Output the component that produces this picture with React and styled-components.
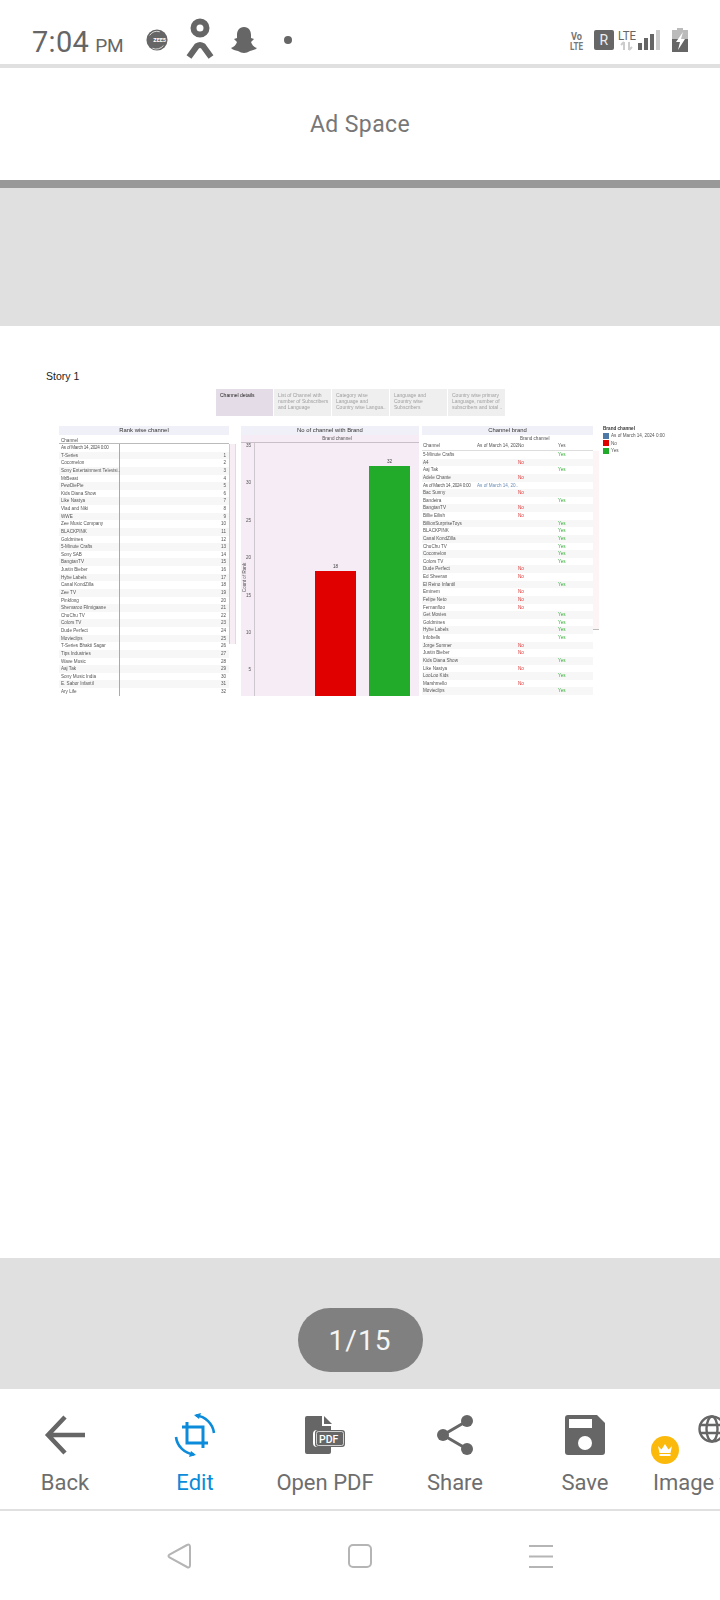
import styled, { createGlobalStyle } from 'styled-components';

const GlobalStyle = createGlobalStyle`
  html, body {
    margin: 0;
    padding: 0;
    background: #fff;
  }
  * {
    box-sizing: border-box;
  }
`;

const rankRows = [
  'T-Series', 'Cocomelon', 'Sony Entertainment Televisi..', 'MrBeast', 'PewDiePie',
  'Kids Diana Show', 'Like Nastya', 'Vlad and Niki', 'WWE', 'Zee Music Company',
  'BLACKPINK', 'Goldmines', '5-Minute Crafts', 'Sony SAB', 'BangtanTV', 'Justin Bieber',
  'Hybe Labels', 'Canal KondZilla', 'Zee TV', 'Pinkfong', 'Shemaroo Filmigaane',
  'ChuChu TV', 'Colors TV', 'Dude Perfect', 'Movieclips', 'T-Series Bhakti Sagar',
  'Tips Industries', 'Wave Music', 'Aaj Tak', 'Sony Music India', 'E. Sabor Infantil', 'Ary Life',
];

const brandRows = [
  ['5-Minute Crafts', 'Yes'], ['A4', 'No'], ['Aaj Tak', 'Yes'], ['Adele Chante', 'No'],
  ['As of March 14, 2024 0:00', 'date'], ['Bac Sunny', 'No'], ['Bandeira', 'Yes'], ['BangtanTV', 'No'],
  ['Billie Eilish', 'No'], ['BillionSurpriseToys', 'Yes'], ['BLACKPINK', 'Yes'], ['Canal KondZilla', 'Yes'],
  ['ChuChu TV', 'Yes'], ['Cocomelon', 'Yes'], ['Colors TV', 'Yes'], ['Dude Perfect', 'No'],
  ['Ed Sheeran', 'No'], ['El Reino Infantil', 'Yes'], ['Eminem', 'No'], ['Felipe Neto', 'No'],
  ['Fernanfloo', 'No'], ['Get Movies', 'Yes'], ['Goldmines', 'Yes'], ['Hybe Labels', 'Yes'],
  ['Infobells', 'Yes'], ['Jorge Sumner', 'No'], ['Justin Bieber', 'No'], ['Kids Diana Show', 'Yes'],
  ['Like Nastya', 'No'], ['LooLoo Kids', 'Yes'], ['Marshmello', 'No'], ['Movieclips', 'Yes'],
];

const storyTabs = [
  'Channel details',
  'List of Channel with\nnumber of Subscribers\nand Language',
  'Category wise\nLanguage and\nCountry wise Langua..',
  'Language and\nCountry wise\nSubscribers',
  'Country wise primary\nLanguage, number of\nsubscribers and total ..',
];

const yTicks = ['35', '30', '25', '20', '15', '10', '5'];

const Screen = styled.div`
  width: 720px;
  height: 1600px;
  overflow: hidden;
  display: flex;
  flex-direction: column;
  background: #fff;
  font-family: Roboto, 'Liberation Sans', sans-serif;
`;

const StatusBar = styled.div`
  height: 68px;
  flex: none;
  display: flex;
  align-items: center;
  padding: 16px 32px 0 32px;
  border-bottom: 4px solid #e0e0e0;
  color: #666;
`;

const Clock = styled.div`
  font-size: 29px;
  width: 114px;
  margin-top: 3px;
  letter-spacing: 0.3px;
  white-space: nowrap;
  span {
    font-size: 19px;
    margin-left: 6px;
    letter-spacing: 0;
  }
`;

const NotifIcons = styled.div`
  display: flex;
  align-items: center;
  flex: 1;
`;

const SysIcons = styled.div`
  display: flex;
  align-items: center;
`;

const AdBar = styled.div`
  height: 112px;
  flex: none;
  display: flex;
  align-items: center;
  justify-content: center;
  font-size: 23px;
  color: #777;
  letter-spacing: 0.4px;
`;

const DarkRule = styled.div`
  height: 8px;
  flex: none;
  background: #999;
`;

const GreyBand = styled.div`
  height: ${p => p.$h}px;
  flex: none;
  background: #e0e0e0;
  display: flex;
  justify-content: center;
  position: relative;
`;

const DocPage = styled.div`
  flex: 1;
  background: #fff;
  min-height: 0;
  padding: 44px 0 0 46px;
`;

const StoryTitle = styled.div`
  font-family: 'Liberation Sans', sans-serif;
  font-size: 10.5px;
  color: #222;
  line-height: 13px;
`;

const TabRow = styled.div`
  display: flex;
  gap: 1px;
  margin: 6px 0 0 170px;
  filter: blur(0.25px);
`;

const StoryTab = styled.div`
  width: 57px;
  height: 27px;
  padding: 3px 2px 0 4px;
  background: ${p => (p.$active ? '#e4dce6' : '#efefef')};
  color: ${p => (p.$active ? '#222' : '#a0a0a0')};
  font-family: 'Liberation Sans', sans-serif;
  font-size: 5px;
  line-height: 6px;
  white-space: pre-line;
`;

const Dash = styled.div`
  display: flex;
  height: 270px;
  margin: 10px 0 0 13px;
  overflow: hidden;
  filter: blur(0.25px);
`;

const Panel = styled.div`
  width: ${p => p.$w}px;
  margin-right: ${p => p.$mr}px;
  flex: none;
`;

const PanelTitle = styled.div`
  height: 9px;
  width: ${p => p.$w}px;
  background: #f0f0f8;
  text-align: center;
  font-family: 'Liberation Sans', sans-serif;
  font-size: 5.9px;
  line-height: 9px;
  color: #333;
`;

const Micro = styled.div`
  font-family: 'Liberation Sans', sans-serif;
  font-size: 4.6px;
  color: #555;
  white-space: nowrap;
`;

const RankHead = styled(Micro)`
  width: 170px;
  height: 9px;
  padding: 3px 0 0 2px;
  line-height: 5px;
  border-bottom: 1px solid #bbb;
`;

const RankBody = styled.div`
  display: grid;
  grid-template-columns: 170px 7px;
`;

const RankRow = styled(Micro)`
  display: grid;
  grid-column: 1;
  grid-template-columns: 61px 1fr;
  height: 7.63px;
  line-height: 7.63px;
  background: ${p => (p.$odd ? '#f7f7f7' : '#fff')};
`;

const RankName = styled.div`
  padding-left: 2px;
  border-right: 1px solid #aaa;
`;

const AsOf = styled.span`
  letter-spacing: -0.25px;
`;

const RankNum = styled.div`
  text-align: right;
  padding-right: 3px;
`;

const RankStripe = styled.div`
  grid-column: 2;
  grid-row: 1 / 34;
  height: 200px;
  background: #f7eef5;
  border-left: 1px solid #ccc;
  border-right: 1px solid #ddd;
`;

const ChartBody = styled.div`
  height: 261px;
  background: #f5ecf5;
  display: flex;
  flex-direction: column;
`;

const ChartHead = styled(Micro)`
  height: 7px;
  text-align: center;
  line-height: 7px;
  padding-left: 14px;
`;

const Plot = styled.div`
  flex: 1;
  display: flex;
  border-top: 1px solid #c9bfc9;
`;

const Axis = styled.div`
  width: 14px;
  flex: none;
  border-right: 1px solid #cfc7cf;
  position: relative;
  display: flex;
  align-items: center;
`;

const AxisTitle = styled(Micro)`
  transform: rotate(-90deg);
  transform-origin: center;
  width: 6px;
  margin: 16px 0 0 0;
  display: flex;
  justify-content: center;
`;

const AxisTick = styled(Micro)`
  position: absolute;
  right: 3px;
  top: ${p => p.$top}px;
  line-height: 5px;
`;

const Bars = styled.div`
  flex: 1;
  display: flex;
  align-items: flex-end;
  padding-left: 60px;
  gap: 13px;
`;

const Bar = styled.div`
  width: 41px;
  height: ${p => p.$h}px;
  background: ${p => p.$color};
  position: relative;
`;

const BarLabel = styled(Micro)`
  position: absolute;
  top: -7px;
  left: 0;
  right: 0;
  text-align: center;
  color: #444;
`;

const BrandBody = styled.div`
  display: grid;
  grid-template-columns: 171px 6px;
`;

const BrandHead = styled(Micro)`
  grid-column: 1 / 3;
  display: grid;
  grid-template-columns: 54px 41px 40px 1fr;
  width: 171px;
  height: 16px;
  padding: 0 0 1px 1px;
  line-height: 6px;
  border-bottom: 1px solid #ddd;
  align-items: end;
  position: relative;
`;

const BrandCaption = styled(Micro)`
  position: absolute;
  top: 1px;
  left: 98px;
`;

const BrandRows = styled.div`
  grid-column: 1;
`;

const BrandStripe = styled.div`
  grid-column: 2;
  height: 179px;
  background: #fdf4f6;
  border-bottom: 1px solid #bbb;
`;

const BrandRow = styled(Micro)`
  display: grid;
  grid-template-columns: 54px 41px 40px 1fr;
  height: 7.63px;
  line-height: 7.63px;
  padding-left: 1px;
  background: ${p => (p.$odd ? '#f7f7f7' : '#fff')};
`;

const Flag = styled.span`
  color: ${p => p.$color};
  grid-column: ${p => p.$col};
`;

const BrandDate = styled.span`
  color: #6b8db5;
`;

const LegendBox = styled.div`
  width: 70px;
  flex: none;
`;

const LegendTitle = styled(Micro)`
  color: #333;
  font-weight: bold;
  line-height: 6px;
`;

const LegendItem = styled(Micro)`
  display: flex;
  align-items: center;
  gap: 2px;
  height: 7.6px;
  i {
    width: 6px;
    height: 6px;
    flex: none;
    background: ${p => p.$color};
  }
`;

const PagePill = styled.div`
  position: absolute;
  top: 50px;
  width: 125px;
  height: 64px;
  border-radius: 32px;
  background: #808080;
  color: #f5f5f5;
  font-size: 28px;
  letter-spacing: 1px;
  display: flex;
  align-items: center;
  justify-content: center;
`;

const Toolbar = styled.div`
  height: 122px;
  flex: none;
  border-bottom: 2px solid #e0e0e0;
  display: flex;
  position: relative;
  overflow: hidden;
`;

const Tool = styled.div`
  width: 130px;
  flex: none;
  display: flex;
  flex-direction: column;
  align-items: center;
  padding-top: 24px;
  color: ${p => (p.$active ? '#0b8bd9' : '#6e6e6e')};
  font-size: 22px;
  white-space: nowrap;
`;

const ToolIcon = styled.div`
  width: 44px;
  height: 44px;
  display: flex;
  align-items: center;
  justify-content: center;
  margin-bottom: 13px;
`;

const GlobeWrap = styled.div`
  position: absolute;
  left: 698px;
  top: 25px;
`;

const CrownBadge = styled.div`
  position: absolute;
  left: 651px;
  top: 47px;
  width: 28px;
  height: 28px;
  border-radius: 50%;
  background: #fbb90c;
  display: flex;
  align-items: center;
  justify-content: center;
`;

const ImageLabel = styled.div`
  position: absolute;
  left: 653px;
  top: 81px;
  font-size: 22px;
  color: #6e6e6e;
  white-space: nowrap;
`;

const NavBar = styled.div`
  height: 89px;
  flex: none;
  display: flex;
  align-items: center;
  justify-content: center;
  gap: 157px;
`;

export default function App() {
  return (
    <Screen>
      <GlobalStyle />
      <StatusBar>
        <Clock>7:04<span>PM</span></Clock>
        <NotifIcons>
          <svg width="22" height="22" viewBox="0 0 24 24">
            <circle cx="12" cy="12" r="11.5" fill="#666" />
            <path d="M4 7 A10 10 0 0 1 15 3" stroke="#fff" strokeWidth="0.8" fill="none" />
            <path d="M7 21 A10 10 0 0 0 19 18" stroke="#fff" strokeWidth="0.8" fill="none" />
            <text x="8" y="14" fontSize="6" fontWeight="700" fill="#fff" fontFamily="Roboto">ZEE5</text>
          </svg>
          <svg width="30" height="44" viewBox="0 0 30 44" style={{ marginLeft: 17 }}>
            <circle cx="15" cy="10" r="6.5" fill="none" stroke="#666" strokeWidth="6" />
            <path d="M4 39 L12 28 Q15 26 18 28 L26 39" fill="none" stroke="#666" strokeWidth="6" />
          </svg>
          <svg width="28" height="28" viewBox="0 0 28 28" style={{ marginLeft: 15 }}>
            <path d="M14 1 C9 1 7 5 7 9 L7 12 L4 13 L7 16 C6 19 4 21 1 22 C3 24 5 24 8 25 C10 26 12 27 14 27 C16 27 18 26 20 25 C23 24 25 24 27 22 C24 21 22 19 21 16 L24 13 L21 12 L21 9 C21 5 19 1 14 1 Z" fill="#666" />
          </svg>
          <svg width="10" height="10" viewBox="0 0 10 10" style={{ marginLeft: 25 }}>
            <circle cx="5" cy="5" r="4" fill="#666" />
          </svg>
        </NotifIcons>
        <SysIcons>
          <svg width="16" height="24" viewBox="0 0 16 24">
            <text x="2" y="12" fontSize="11" fontWeight="700" fill="#777" fontFamily="Roboto" textLength="11" lengthAdjust="spacingAndGlyphs">Vo</text>
            <text x="1" y="22" fontSize="10" fontWeight="700" fill="#777" fontFamily="Roboto" textLength="13" lengthAdjust="spacingAndGlyphs">LTE</text>
          </svg>
          <svg width="20" height="20" viewBox="0 0 20 20" style={{ marginLeft: 9 }}>
            <rect width="20" height="20" rx="2" fill="#666" />
            <text x="5.5" y="15" fontSize="14" fill="#eee" fontFamily="Roboto">R</text>
          </svg>
          <svg width="44" height="24" viewBox="0 0 44 24" style={{ marginLeft: 3 }}>
            <text x="1" y="12" fontSize="12" fill="#666" fontFamily="Roboto" textLength="18" lengthAdjust="spacingAndGlyphs">LTE</text>
            <path d="M7 22 V14 M4 17 L7 14 M12 14 V22 M12 22 L15 19" stroke="#ccc" strokeWidth="2" fill="none" />
            <rect x="21" y="15" width="4" height="7" fill="#666" />
            <rect x="27" y="10" width="4" height="12" fill="#666" />
            <rect x="33" y="6" width="4" height="16" fill="#666" />
            <rect x="39" y="2" width="4" height="20" fill="#ccc" />
          </svg>
          <svg width="16" height="24" viewBox="0 0 16 24" style={{ marginLeft: 11 }}>
            <path d="M5 0 H11 V2 H16 V24 H0 V2 H5 Z" fill="#bbb" />
            <path d="M0 11 H16 V24 H0 Z" fill="#666" />
            <path d="M11 4 L4 14 H8 L6 22 L13 11 H9 Z" fill="#fff" />
          </svg>
        </SysIcons>
      </StatusBar>

      <AdBar>Ad Space</AdBar>
      <DarkRule />
      <GreyBand $h={138} />

      <DocPage>
        <StoryTitle>Story 1</StoryTitle>
        <TabRow>
          {storyTabs.map((t, i) => (
            <StoryTab key={t} $active={i === 0}>{t}</StoryTab>
          ))}
        </TabRow>
        <Dash>
          <Panel $w={177} $mr={5}>
            <PanelTitle $w={170}>Rank wise channel</PanelTitle>
            <RankHead>Channel</RankHead>
            <RankBody>
              <RankRow>
                <RankName><AsOf>As of March 14, 2024 0:00</AsOf></RankName>
                <RankNum />
              </RankRow>
              <RankStripe />
              {rankRows.map((name, i) => (
                <RankRow key={name} $odd={i % 2 === 0}>
                  <RankName>{name}</RankName>
                  <RankNum>{i + 1}</RankNum>
                </RankRow>
              ))}
            </RankBody>
          </Panel>

          <Panel $w={178} $mr={3}>
            <PanelTitle $w={178}>No of channel with Brand</PanelTitle>
            <ChartBody>
              <ChartHead>Brand channel</ChartHead>
              <Plot>
                <Axis>
                  <AxisTitle>Count of Rank</AxisTitle>
                  {yTicks.map((t, i) => (
                    <AxisTick key={t} $top={i * 37.4}>{t}</AxisTick>
                  ))}
                </Axis>
                <Bars>
                  <Bar $h={125} $color="#e00000"><BarLabel>18</BarLabel></Bar>
                  <Bar $h={230} $color="#22ab2b"><BarLabel>32</BarLabel></Bar>
                </Bars>
              </Plot>
            </ChartBody>
          </Panel>

          <Panel $w={177} $mr={4}>
            <PanelTitle $w={171}>Channel brand</PanelTitle>
            <BrandBody>
              <BrandHead>
                <BrandCaption>Brand channel</BrandCaption>
                <span>Channel</span>
                <span>As of March 14, 202..</span>
                <span>No</span>
                <span>Yes</span>
              </BrandHead>
              <BrandRows>
                {brandRows.map(([name, v], i) => (
                  <BrandRow key={name} $odd={i % 2 === 1}>
                    {v === 'date' ? <AsOf>{name}</AsOf> : <span>{name}</span>}
                    {v === 'date' && <BrandDate>As of March 14, 20..</BrandDate>}
                    {v === 'No' && <Flag $color="#e03030" $col={3}>No</Flag>}
                    {v === 'Yes' && <Flag $color="#35ad3b" $col={4}>Yes</Flag>}
                  </BrandRow>
                ))}
              </BrandRows>
              <BrandStripe />
            </BrandBody>
          </Panel>

          <LegendBox>
            <LegendTitle>Brand channel</LegendTitle>
            <LegendItem $color="#4e79a7"><i />As of March 14, 2024 0:00</LegendItem>
            <LegendItem $color="#e00000"><i />No</LegendItem>
            <LegendItem $color="#22ab2b"><i />Yes</LegendItem>
          </LegendBox>
        </Dash>
      </DocPage>

      <GreyBand $h={131}>
        <PagePill>1/15</PagePill>
      </GreyBand>

      <Toolbar>
        <Tool>
          <ToolIcon>
            <svg width="44" height="44" viewBox="0 0 44 44" fill="none" stroke="#666" strokeWidth="4.5">
              <path d="M42 22 H6 M22 4 L5 22 L22 40" />
            </svg>
          </ToolIcon>
          Back
        </Tool>
        <Tool $active>
          <ToolIcon>
            <svg width="44" height="44" viewBox="0 0 44 44" fill="none" stroke="#0b8bd9" strokeWidth="2.6">
              <path d="M14 9 V30 H35 M9 14 H30 V35" strokeWidth="3" />
              <path d="M23 2.5 A20 20 0 0 1 41 20 M3 24 A20 20 0 0 0 21 41.5" />
              <path d="M21 2 L28 0 L26 6 Z M23 42 L16 44 L18 38 Z" fill="#0b8bd9" stroke="none" />
            </svg>
          </ToolIcon>
          Edit
        </Tool>
        <Tool>
          <ToolIcon>
            <svg width="44" height="44" viewBox="0 0 44 44">
              <path d="M2 5 Q2 3 4 3 H19 V13 H28 V17 H14 Q10 17 10 21 V30 Q10 34 14 34 H28 V39 Q28 41 26 41 H4 Q2 41 2 39 Z" fill="#666" />
              <path d="M21 3 L29 11 H21 Z" fill="#666" />
              <rect x="12" y="17" width="30" height="17" rx="3" fill="#666" />
              <rect x="13.5" y="18.5" width="27" height="14" rx="2" fill="none" stroke="#eee" strokeWidth="0.8" />
              <text x="16" y="30" fontSize="10.5" fontWeight="500" fill="#fff" fontFamily="Roboto">PDF</text>
            </svg>
          </ToolIcon>
          Open PDF
        </Tool>
        <Tool>
          <ToolIcon>
            <svg width="44" height="44" viewBox="0 0 44 44" fill="#666">
              <path d="M34 8 L10 22 L34 36" fill="none" stroke="#666" strokeWidth="3" />
              <circle cx="34" cy="8" r="6" />
              <circle cx="10" cy="22" r="6" />
              <circle cx="34" cy="36" r="6" />
            </svg>
          </ToolIcon>
          Share
        </Tool>
        <Tool>
          <ToolIcon>
            <svg width="44" height="44" viewBox="0 0 44 44">
              <path d="M5 2 H34 L42 10 V39 Q42 42 39 42 H5 Q2 42 2 39 V5 Q2 2 5 2 Z" fill="#666" />
              <rect x="6" y="6" width="23" height="9" fill="#fff" />
              <circle cx="22" cy="30" r="7" fill="#fff" />
            </svg>
          </ToolIcon>
          Save
        </Tool>
        <GlobeWrap>
          <svg width="28" height="30" viewBox="0 0 28 30" fill="none" stroke="#666" strokeWidth="2.4">
            <circle cx="14" cy="15" r="12.5" />
            <ellipse cx="14" cy="15" rx="5.5" ry="12.5" />
            <path d="M2 11 H26 M2 19 H26" />
          </svg>
        </GlobeWrap>
        <CrownBadge>
          <svg width="16" height="14" viewBox="0 0 16 14" fill="#fff">
            <path d="M1 3 L4.5 6.5 L8 1 L11.5 6.5 L15 3 L13.5 10 H2.5 Z" />
            <rect x="2.5" y="11" width="11" height="2" />
          </svg>
        </CrownBadge>
        <ImageLabel>Image to Text</ImageLabel>
      </Toolbar>

      <NavBar>
        <svg width="24" height="26" viewBox="0 0 24 26" fill="none" stroke="#b5b5b5" strokeWidth="2">
          <path d="M20 2 Q23 0.5 23 4 V22 Q23 25.5 20 24 L2.5 14.5 Q0.5 13 2.5 11.5 Z" />
        </svg>
        <svg width="24" height="24" viewBox="0 0 24 24" fill="none" stroke="#b5b5b5" strokeWidth="2">
          <rect x="1" y="1" width="22" height="22" rx="4" />
        </svg>
        <svg width="24" height="24" viewBox="0 0 24 24" fill="none" stroke="#b5b5b5" strokeWidth="2">
          <path d="M0 2 H24 M0 12.5 H24 M0 23 H24" />
        </svg>
      </NavBar>
    </Screen>
  );
}
